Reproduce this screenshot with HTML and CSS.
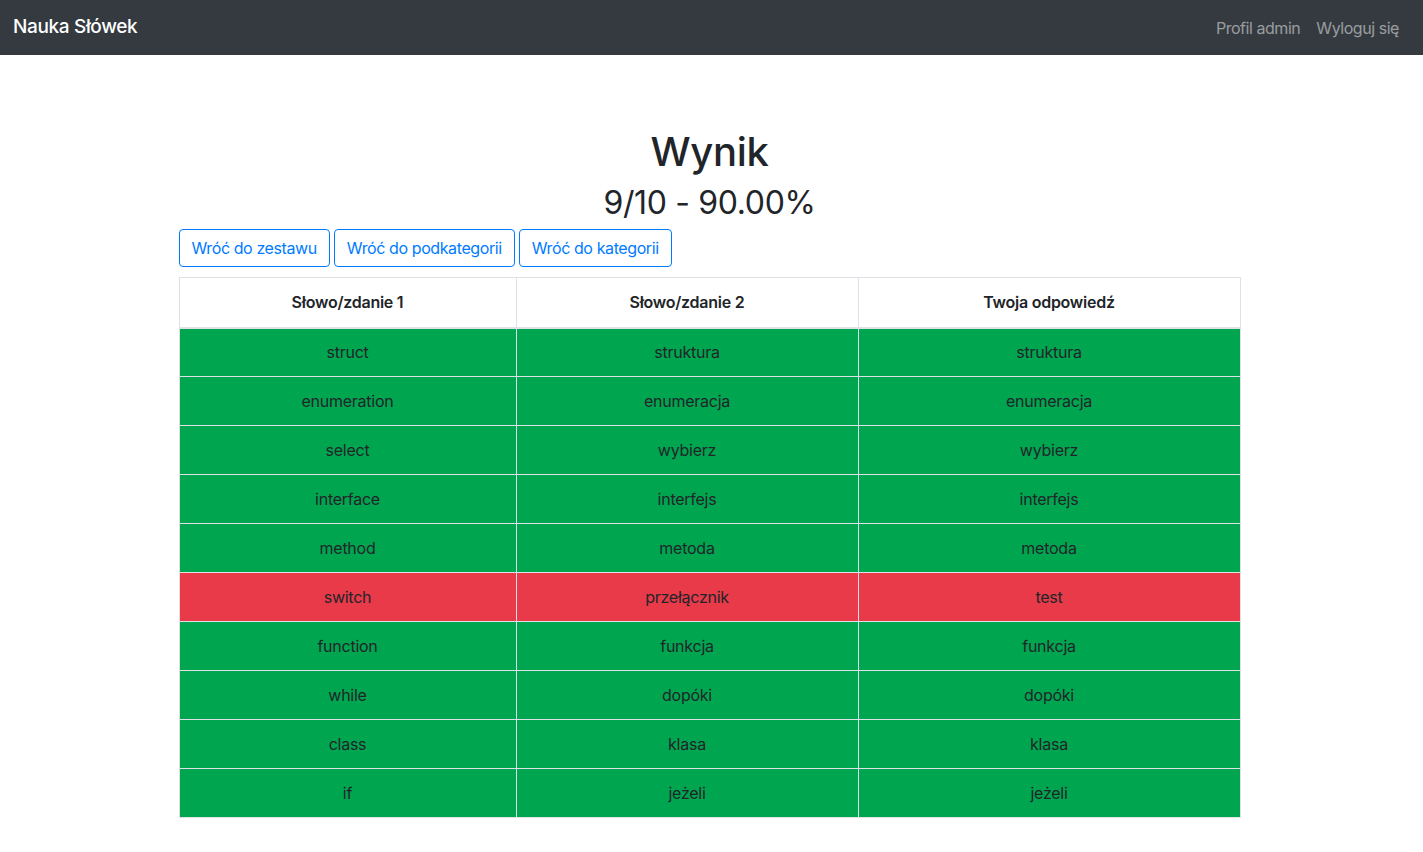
FILE: index.html
```html
<!DOCTYPE html>
<html lang="pl">
<head>
<meta charset="utf-8">
<title>Nauka Słówek</title>
<link rel="stylesheet" href="styles.css">
</head>
<body>
<nav class="navbar">
  <a class="brand" href="#">Nauka Słówek</a>
  <div class="nav-links">
    <a href="#">Profil admin</a>
    <a href="#">Wyloguj się</a>
  </div>
</nav>
<main class="container">
  <h1 class="title">Wynik</h1>
  <h2 class="score">9/10 - 90.00%</h2>
  <div class="actions">
    <a class="btn" href="#">Wróć do zestawu</a>
    <a class="btn" href="#">Wróć do podkategorii</a>
    <a class="btn" href="#">Wróć do kategorii</a>
  </div>
  <table class="results">
    <colgroup>
      <col class="c1"><col class="c2"><col class="c3">
    </colgroup>
    <thead>
      <tr><th>Słowo/zdanie 1</th><th>Słowo/zdanie 2</th><th>Twoja odpowiedź</th></tr>
    </thead>
    <tbody>
      <tr class="ok"><td>struct</td><td>struktura</td><td>struktura</td></tr>
      <tr class="ok"><td>enumeration</td><td>enumeracja</td><td>enumeracja</td></tr>
      <tr class="ok"><td>select</td><td>wybierz</td><td>wybierz</td></tr>
      <tr class="ok"><td>interface</td><td>interfejs</td><td>interfejs</td></tr>
      <tr class="ok"><td>method</td><td>metoda</td><td>metoda</td></tr>
      <tr class="bad"><td>switch</td><td>przełącznik</td><td>test</td></tr>
      <tr class="ok"><td>function</td><td>funkcja</td><td>funkcja</td></tr>
      <tr class="ok"><td>while</td><td>dopóki</td><td>dopóki</td></tr>
      <tr class="ok"><td>class</td><td>klasa</td><td>klasa</td></tr>
      <tr class="ok"><td>if</td><td>jeżeli</td><td>jeżeli</td></tr>
    </tbody>
  </table>
</main>
</body>
</html>
```
FILE: styles.css
```css
* { box-sizing: border-box; }
html, body { margin: 0; padding: 0; }
body {
  font-family: Inter, "Noto Sans", "Liberation Sans", sans-serif;
  font-size: 16px;
  line-height: 1.5;
  color: #212529;
  background: #fff;
}
a { text-decoration: none; }

.navbar {
  height: 55px;
  background: #343a40;
  display: flex;
  align-items: center;
  justify-content: space-between;
  padding: 0 16px 0 13px;
}
.brand {
  color: #fff;
  font-size: 19px;
  font-weight: 500;
  letter-spacing: -0.35px;
}
.nav-links { display: flex; }
.nav-links a {
  color: rgba(255,255,255,0.5);
  padding: 0 8px;
  font-size: 16px;
  letter-spacing: -0.45px;
}

.container {
  width: 1062px;
  margin-left: calc(50% - 533px);
  padding-top: 73px;
}
.title {
  margin: 0 0 8px;
  text-align: center;
  font-size: 40px;
  font-weight: 500;
  line-height: 48px;
  letter-spacing: -0.3px;
}
.score {
  margin: 0 0 7px;
  text-align: center;
  font-size: 32px;
  font-weight: 400;
  line-height: 38px;
  letter-spacing: -0.35px;
}
.actions {
  display: flex;
  gap: 4px;
  margin-bottom: 10px;
}
.btn {
  display: inline-block;
  height: 38px;
  padding: 0 12px;
  line-height: 36px;
  border: 1px solid #007bff;
  border-radius: 4px;
  color: #007bff;
  font-size: 16px;
  letter-spacing: -0.4px;
}

.results {
  width: 100%;
  border-collapse: collapse;
  table-layout: fixed;
  border: 1px solid #dee2e6;
}
.c1 { width: 337px; }
.c2 { width: 342px; }
.c3 { width: auto; }
.results th, .results td {
  text-align: center;
  padding: 0 12px;
  border: 1px solid #dee2e6;
  font-size: 16px;
  letter-spacing: -0.25px;
}
.results th {
  height: 50px;
  font-weight: 600;
  border-bottom: 2px solid #dee2e6;
}
.results td { height: 49px; }
.results tr.ok td { background: #00a54f; }
.results tr.bad td { background: #e83a49; }
```
